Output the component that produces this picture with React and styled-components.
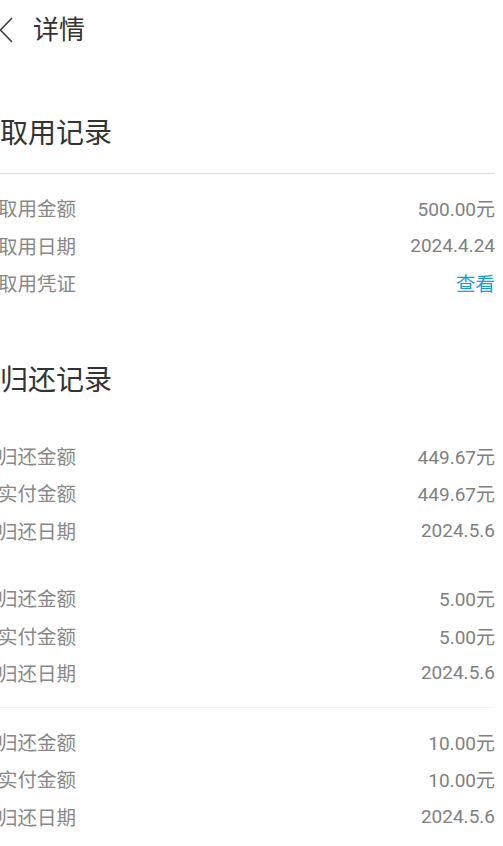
import styled, { createGlobalStyle } from "styled-components";

const GlobalStyle = createGlobalStyle`
  html, body {
    margin: 0;
    padding: 0;
    background: #fff;
  }
  body {
    font-family: Roboto, "Noto Sans CJK SC", "Noto Sans", sans-serif;
    -webkit-font-smoothing: antialiased;
  }
`;

const Page = styled.div`
  margin-left: -2px;
  padding-right: 8px;
  background: #fff;
  min-height: 846px;
`;

const Header = styled.header`
  display: flex;
  align-items: center;
  height: 59px;
  gap: 19px;
`;

const BackButton = styled.button`
  display: flex;
  align-items: center;
  justify-content: center;
  width: 16px;
  height: 30px;
  padding: 0;
  border: none;
  background: none;
  color: #333;
`;

const PageTitle = styled.h1`
  margin: 0;
  font-size: 26px;
  font-weight: 400;
  color: #333;
  line-height: 30px;
`;

const SectionTitle = styled.h2`
  margin: ${(p) => p.$top}px 0 0 2px;
  padding-bottom: ${(p) => p.$bottom}px;
  font-size: 28px;
  font-weight: 400;
  line-height: 40px;
  color: #333;
  border-bottom: ${(p) => (p.$line ? "1px solid #dcdcdc" : "none")};
`;

const Group = styled.div`
  padding: 15px 0;
  margin-left: 2px;
  border-top: ${(p) => (p.$divided ? "1px solid #f2f2f2" : "none")};
`;

const Row = styled.div`
  display: flex;
  justify-content: space-between;
  align-items: center;
  height: 37.5px;
  font-size: 19.5px;
  margin-left: -2px;
`;

const Label = styled.span`
  color: #888;
`;

const Value = styled.span`
  color: #808080;
  font-size: 19px;
`;

const Link = styled.a`
  color: #1e9bd7;
  text-decoration: none;
`;

const ChevronLeft = () => (
  <svg width="14" height="26" viewBox="0 0 14 26" fill="none">
    <path d="M12.5 1.5 L1.5 13 L12.5 24.5" stroke="#444" strokeWidth="1.7" strokeLinecap="round" strokeLinejoin="round" />
  </svg>
);

const repayments = [
  { amount: "449.67元", paid: "449.67元", date: "2024.5.6" },
  { amount: "5.00元", paid: "5.00元", date: "2024.5.6" },
  { amount: "10.00元", paid: "10.00元", date: "2024.5.6", divided: true },
];

export default function App() {
  return (
    <>
      <GlobalStyle />
      <Page>
        <Header>
          <BackButton>
            <ChevronLeft />
          </BackButton>
          <PageTitle>详情</PageTitle>
        </Header>

        <SectionTitle $top={55} $bottom={19} $line>
          取用记录
        </SectionTitle>
        <Group>
          <Row>
            <Label>取用金额</Label>
            <Value>500.00元</Value>
          </Row>
          <Row>
            <Label>取用日期</Label>
            <Value>2024.4.24</Value>
          </Row>
          <Row>
            <Label>取用凭证</Label>
            <Link href="#">查看</Link>
          </Row>
        </Group>

        <SectionTitle $top={44} $bottom={21}>
          归还记录
        </SectionTitle>
        {repayments.map((r, i) => (
          <Group key={i} $divided={r.divided}>
            <Row>
              <Label>归还金额</Label>
              <Value>{r.amount}</Value>
            </Row>
            <Row>
              <Label>实付金额</Label>
              <Value>{r.paid}</Value>
            </Row>
            <Row>
              <Label>归还日期</Label>
              <Value>{r.date}</Value>
            </Row>
          </Group>
        ))}
      </Page>
    </>
  );
}
